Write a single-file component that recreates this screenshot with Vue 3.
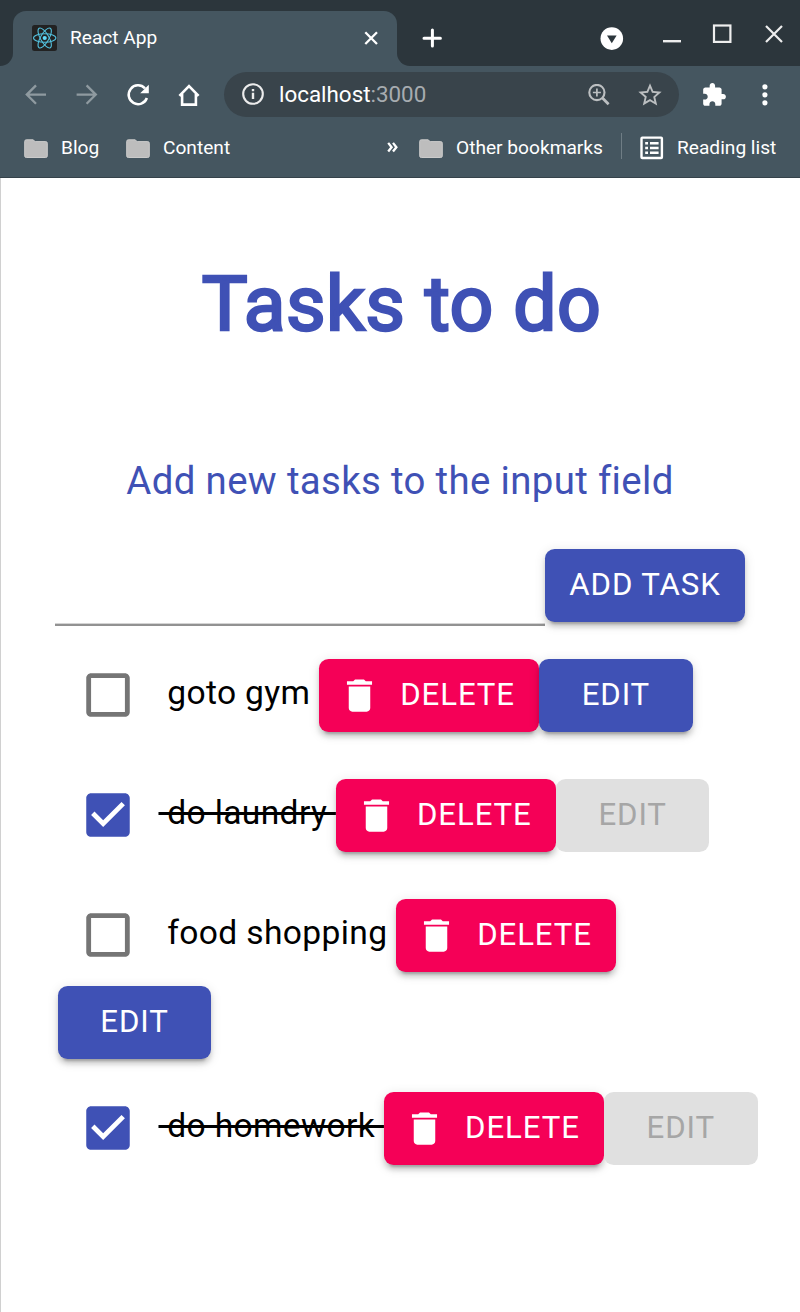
<script setup>
import { ref } from 'vue'

const bookmarks = ['Blog', 'Content']
const draft = ref('')
const tasks = ref([
  { id: 1, name: 'goto gym', done: false },
  { id: 2, name: 'do laundry', done: true },
  { id: 3, name: 'food shopping', done: false },
  { id: 4, name: 'do homework', done: true }
])

function addTask() {
  const name = draft.value.trim()
  if (name) tasks.value.push({ id: Date.now(), name, done: false })
  draft.value = ''
}
function removeTask(id) {
  tasks.value = tasks.value.filter((t) => t.id !== id)
}
</script>

<template>
  <div class="window">
    <header class="chrome">
      <div class="strip">
        <div class="edge"></div>
        <div class="tab">
          <svg class="favicon" width="26" height="26" viewBox="0 0 26 26">
            <rect x="0" y="0" width="25" height="26" rx="2.5" fill="#222" />
            <g fill="none" stroke="#53c1de" stroke-width="1.05">
              <ellipse cx="12.7" cy="13" rx="11.2" ry="4.2" />
              <ellipse cx="12.7" cy="13" rx="11.2" ry="4.2" transform="rotate(60 12.7 13)" />
              <ellipse cx="12.7" cy="13" rx="11.2" ry="4.2" transform="rotate(120 12.7 13)" />
            </g>
            <circle cx="12.7" cy="13" r="2.1" fill="#61dafb" />
          </svg>
          <span class="tab-title">React App</span>
          <svg class="tab-close" width="14" height="14" viewBox="0 0 14 14" stroke="#fff" stroke-width="2.3">
            <path d="M1.3 1.3L13 13M13 1.3L1.3 13" />
          </svg>
        </div>
        <div class="strip-rest">
          <svg class="plus" width="20" height="20" viewBox="0 0 20 20" stroke="#fff" stroke-width="3" stroke-linecap="round">
            <path d="M10.4 2V18M2 10.2H18.4" />
          </svg>
          <svg class="search-tabs" width="24" height="24" viewBox="0 0 24 24">
            <circle cx="11.8" cy="11.6" r="11.3" fill="#fff" />
            <path d="M7 8.6H16.6L11.8 16.2Z" fill="#2c363c" />
          </svg>
          <svg class="min" width="18" height="3" viewBox="0 0 18 3"><path d="M0 1.2H18" stroke="#eee" stroke-width="2.4" /></svg>
          <svg class="max" width="20" height="20" viewBox="0 0 20 20"><rect x="2" y="1.5" width="16.4" height="16.4" fill="none" stroke="#eee" stroke-width="2.2" /></svg>
          <svg class="close" width="18" height="18" viewBox="0 0 18 18"><path d="M1 1L17 17M17 1L1 17" stroke="#eee" stroke-width="2.2" /></svg>
        </div>
      </div>

      <div class="toolbar">
        <svg class="back" width="22" height="22" viewBox="0 0 22 22" fill="none" stroke="#8f9aa0" stroke-width="2.3">
          <path d="M21 10.6H2M11 1.4L1.8 10.6L11 19.8" />
        </svg>
        <svg class="forward" width="22" height="22" viewBox="0 0 22 22" fill="none" stroke="#8f9aa0" stroke-width="2.3">
          <path d="M0.6 10.6H20M10.6 1.4L19.8 10.6L10.6 19.8" />
        </svg>
        <svg class="reload" width="24" height="24" viewBox="0 0 24 24">
          <path d="M19 5.4A9.4 9.4 0 1 0 20.9 15" fill="none" stroke="#fff" stroke-width="2.5" />
          <path d="M22.8 1.7V10.3H14.2Z" fill="#fff" />
        </svg>
        <svg class="home" width="22" height="24" viewBox="0 0 22 24" fill="none" stroke="#fff" stroke-width="2.6">
          <path d="M1.4 12.8L11 3.2L20.6 12.8M4.1 11V21.6H17.9V11" />
        </svg>
        <div class="omnibox">
          <svg class="info" width="24" height="24" viewBox="0 0 24 24">
            <circle cx="12" cy="12" r="9.8" fill="none" stroke="#ececec" stroke-width="2.1" />
            <path d="M12 10.8V17M12 7V9.3" stroke="#ececec" stroke-width="2.4" />
          </svg>
          <span class="url">localhost<i>:3000</i></span>
          <svg class="zoom" width="22" height="22" viewBox="0 0 22 22" fill="none" stroke="#bcbfc1">
            <circle cx="8.9" cy="8.5" r="7.6" stroke-width="2.1" />
            <path d="M14.2 13.8L20.6 20.2" stroke-width="2.8" />
            <path d="M8.9 4.5V12.5M4.9 8.5H12.9" stroke-width="1.7" />
          </svg>
          <svg class="star" width="28" height="28" viewBox="0 0 24 24" fill="#bcbfc1">
            <path d="M22 9.24l-7.19-.62L12 2 9.19 8.63 2 9.24l5.46 4.73L5.82 21 12 17.27 18.18 21l-1.63-7.03L22 9.24zM12 15.4l-3.76 2.27 1-4.28-3.32-2.88 4.38-.38L12 6.1l1.71 4.04 4.38.38-3.32 2.88 1 4.28L12 15.4z" />
          </svg>
        </div>
        <svg class="puzzle" width="26" height="26" viewBox="0 0 24 24" fill="#fff">
          <path d="M20.5 11H19V7c0-1.1-.9-2-2-2h-4V3.5C13 2.12 11.88 1 10.5 1S8 2.12 8 3.5V5H4c-1.1 0-1.99.9-1.99 2v3.8H3.5c1.49 0 2.7 1.21 2.7 2.7s-1.21 2.7-2.7 2.7H2V20c0 1.1.9 2 2 2h3.8v-1.5c0-1.49 1.21-2.7 2.7-2.7s2.7 1.21 2.7 2.7V22H17c1.1 0 2-.9 2-2v-4h1.5c1.38 0 2.5-1.12 2.5-2.5S21.88 11 20.5 11z" />
        </svg>
        <svg class="menu" width="6" height="22" viewBox="0 0 6 22" fill="#fff">
          <circle cx="2.9" cy="2.8" r="2.6" /><circle cx="2.9" cy="10.8" r="2.6" /><circle cx="2.9" cy="18.8" r="2.6" />
        </svg>
      </div>

      <div class="bookmarks">
        <div v-for="b in bookmarks" :key="b" class="bookmark">
          <svg class="folder" width="24" height="20" viewBox="0 0 24 20"><path d="M2.3 .8H9L11.2 2.6H21.7Q23.3 2.6 23.3 4.2V16.9Q23.3 18.5 21.7 18.5H2.3Q.7 18.5 .7 16.9V2.4Q.7 .8 2.3 .8Z" fill="#bdbdbd" stroke="#cbcbcb" /></svg>
          <span>{{ b }}</span>
        </div>
        <svg class="more" width="12" height="11" viewBox="0 0 12 11" fill="none" stroke="#fff" stroke-width="2.3"><path d="M1.2 .9L4.6 5.2L1.2 9.5M6 .9L9.4 5.2L6 9.5" /></svg>
        <div class="bookmark other">
          <svg class="folder" width="24" height="20" viewBox="0 0 24 20"><path d="M2.3 .8H9L11.2 2.6H21.7Q23.3 2.6 23.3 4.2V16.9Q23.3 18.5 21.7 18.5H2.3Q.7 18.5 .7 16.9V2.4Q.7 .8 2.3 .8Z" fill="#bdbdbd" stroke="#cbcbcb" /></svg>
          <span>Other bookmarks</span>
        </div>
        <div class="divider"></div>
        <div class="bookmark reading">
          <svg width="24" height="24" viewBox="0 0 24 24">
            <rect x="1.5" y="1.6" width="20.4" height="20.4" rx=".8" fill="none" stroke="#fff" stroke-width="2.4" />
            <path d="M5.2 7.2H8M5.2 12H8M5.2 16.8H8M10 7.2H18.6M10 12H18.6M10 16.8H18.6" stroke="#fff" stroke-width="2.5" />
          </svg>
          <span>Reading list</span>
        </div>
      </div>
    </header>

    <main class="page">
      <h1>Tasks to do</h1>
      <p class="lead">Add new tasks to the input field</p>
      <form class="entry" @submit.prevent="addTask">
        <input v-model="draft" class="field" type="text" />
        <button class="btn primary add" type="submit">ADD TASK</button>
      </form>
      <ul class="tasks">
        <li v-for="t in tasks" :key="t.id" class="task">
          <button class="check" type="button" @click="t.done = !t.done">
            <svg width="58" height="58" viewBox="0 0 24 24">
              <path v-if="t.done" fill="#3f51b5" d="M19 3H5c-1.11 0-2 .9-2 2v14c0 1.1.89 2 2 2h14c1.11 0 2-.9 2-2V5c0-1.1-.89-2-2-2zm-9 14l-5-5 1.41-1.41L10 14.17l7.59-7.59L19 8l-9 9z" />
              <path v-else fill="#757575" d="M19 5v14H5V5h14m0-2H5c-1.1 0-2 .9-2 2v14c0 1.1.9 2 2 2h14c1.1 0 2-.9 2-2V5c0-1.1-.9-2-2-2z" />
            </svg>
          </button>
          <span class="name" :class="{ done: t.done }">{{ ' ' + t.name + ' ' }}</span>
          <button class="btn danger" type="button" @click="removeTask(t.id)">
            <svg class="bin" width="43" height="43" viewBox="0 0 24 24" fill="#fff">
              <path d="M6 19c0 1.1.9 2 2 2h8c1.1 0 2-.9 2-2V7H6v12zM19 4h-3.5l-1-1h-5l-1 1H5v2h14V4z" />
            </svg>
            DELETE
          </button>
          <button class="btn primary edit" type="button" :disabled="t.done">EDIT</button>
        </li>
      </ul>
    </main>
  </div>
</template>

<style>
body {
  background: #fff;
}
</style>

<style scoped>
* {
  box-sizing: border-box;
}
.window {
  width: 800px;
  height: 1312px;
  overflow: hidden;
  display: flex;
  flex-direction: column;
  font-family: Roboto, "Liberation Sans", sans-serif;
  color: #000;
}
svg {
  display: block;
  flex: none;
}
.chrome {
  height: 178px;
  flex: none;
  background: #455660;
  border-bottom: 1px solid #35424a;
}
.strip {
  height: 66px;
  display: flex;
  background: linear-gradient(#2c363c 0 28px, #455660 28px);
}
.edge,
.strip-rest {
  background: #2c363c;
}
.edge {
  width: 13px;
  border-bottom-right-radius: 13px;
}
.tab {
  width: 384px;
  height: 55px;
  margin-top: 11px;
  padding: 0 19px;
  display: flex;
  align-items: center;
  background: #455660;
  border-radius: 13px 13px 0 0;
}
.favicon {
  margin-bottom: 1px;
}
.tab-title {
  margin: 0 0 2px 12px;
  font-size: 19.1px;
  color: #fff;
}
.tab-close {
  margin: 0 0 1px auto;
}
.strip-rest {
  flex: 1;
  display: flex;
  border-bottom-left-radius: 13px;
}
.plus {
  margin: 28px 0 0 25px;
}
.search-tabs {
  margin: 27px 0 0 158px;
}
.min {
  margin: 40px 0 0 38.6px;
}
.max {
  margin: 24px 0 0 31.8px;
}
.close {
  margin: 25px 0 0 32.4px;
}
.toolbar {
  height: 57px;
  display: flex;
  align-items: center;
  padding-left: 24.6px;
}
.forward {
  margin-left: 29.4px;
}
.reload {
  margin-left: 28px;
}
.home {
  margin-left: 28px;
}
.omnibox {
  margin-left: 24px;
  width: 455px;
  height: 45px;
  border-radius: 23px;
  background: #39444b;
  display: flex;
  align-items: center;
  padding-left: 17px;
}
.info {
  margin-bottom: 1px;
}
.url {
  margin: 0 0 0 14px;
  width: 309px;
  font-size: 22.4px;
  line-height: 27px;
  color: #fff;
}
.url i {
  font-style: normal;
  color: #a7acb0;
}
.star {
  margin-left: 26px;
}
.puzzle {
  margin-left: 22px;
}
.menu {
  margin-left: 35px;
}
.bookmarks {
  display: flex;
  align-items: center;
  height: 49px;
  padding-left: 24px;
  font-size: 19.15px;
  color: #fff;
}
.bookmark {
  display: flex;
  align-items: center;
  width: 102px;
  white-space: nowrap;
}
.bookmark span {
  margin-left: 13px;
}
.folder {
  margin-top: 2px;
}
.more {
  margin-left: 159px;
}
.other {
  margin-left: 20px;
  width: 202px;
}
.divider {
  width: 1px;
  height: 26px;
  margin-bottom: 3px;
  background: #6f7d85;
}
.reading {
  margin-left: 18px;
}
.page {
  flex: 1;
  border-left: 1px solid #d0d0d0;
}
h1 {
  margin: 80px 0 0;
  height: 92px;
  line-height: 92px;
  text-align: center;
  font-size: 76.8px;
  font-weight: 400;
  letter-spacing: 0.4px;
  text-indent: 2px;
  color: #3f51b5;
  -webkit-text-stroke: 2.6px #3f51b5;
}
.lead {
  margin: 102px 0 0;
  text-align: center;
  font-size: 38.4px;
  line-height: 58px;
  letter-spacing: 0.34px;
  text-indent: -1px;
  color: #3f51b5;
}
.entry {
  margin: 39px 0 0 54px;
  display: flex;
  align-items: flex-start;
}
.field {
  width: 490px;
  height: 77px;
  padding: 0;
  border: 0;
  border-bottom: 2px solid #929292;
  box-shadow: inset 0 -1px #d4d4d4;
  outline: 0;
  background: none;
  font: 38.4px Roboto, sans-serif;
}
.btn {
  height: 73px;
  flex: none;
  display: flex;
  align-items: center;
  justify-content: center;
  padding: 0 0 2px;
  border: 0;
  border-radius: 9.6px;
  font-family: inherit;
  font-size: 31.2px;
  letter-spacing: 0.89px;
  line-height: 54px;
  color: #fff;
  box-shadow: 0 7px 2.4px -5px rgba(0, 0, 0, 0.2), 0 5px 5px 0 rgba(0, 0, 0, 0.14),
    0 2.4px 12px 0 rgba(0, 0, 0, 0.12);
}
.primary {
  background: #3f51b5;
}
.danger {
  background: #f50057;
  width: 220px;
}
.add {
  width: 200px;
}
.edit {
  width: 153.6px;
}
.btn:disabled {
  background: #e0e0e0;
  color: #a6a6a6;
  box-shadow: none;
}
.bin {
  margin: 1px 19px 0 -5px;
}
.tasks {
  list-style: none;
  margin: 33px 0 0;
  padding: 0 40px 0 56.7px;
  display: flex;
  flex-direction: column;
  gap: 33px;
}
.task {
  display: flex;
  flex-wrap: wrap;
  align-content: flex-start;
  row-gap: 14px;
  min-height: 87px;
}
.check {
  width: 58px;
  height: 71px;
  margin-left: 21.3px;
  padding: 0;
  border: 0;
  background: none;
  display: flex;
  align-items: center;
}
.name {
  margin-left: 21.5px;
  white-space: pre;
  font-size: 33.6px;
  line-height: 68px;
  height: 73px;
  letter-spacing: 0.36px;
}
.done {
  text-decoration: line-through;
  text-decoration-thickness: 3.4px;
}
</style>
